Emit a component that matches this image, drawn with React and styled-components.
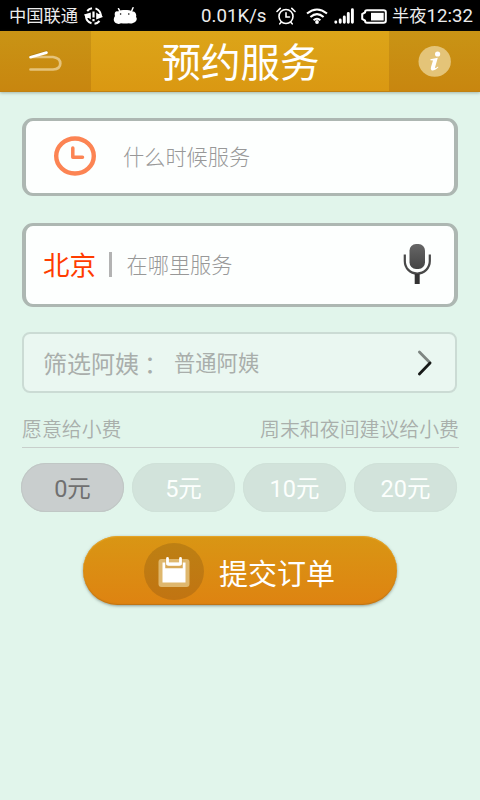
import React from 'react';
import styled, { createGlobalStyle } from 'styled-components';

const Global = createGlobalStyle`
  * { box-sizing: border-box; }
  body { margin: 0; background: #e1f5eb; }
  button { border: 0; padding: 0; margin: 0; background: none; font: inherit; color: inherit; }
`;

const Screen = styled.main`
  width: 480px;
  height: 800px;
  overflow: hidden;
  background: #e1f5eb;
  font-family: Roboto, "Noto Sans CJK SC", sans-serif;
  white-space: nowrap;
`;

const StatusBar = styled.div`
  height: 31px;
  background: #000;
  color: #ececec;
  display: flex;
  align-items: center;
  padding: 1px 8px 0 9px;
  line-height: 30px;
  svg { display: block; flex: none; }
`;
const StatusText = styled.span`
  width: ${p => p.$w}px;
  font-size: ${p => p.$size || 17.3}px;
  margin-right: ${p => p.$gap || 0}px;
`;
const ClockDigits = styled.span`
  font-size: 18.6px;
`;
const StatusIcon = styled.svg`
  margin-right: ${p => p.$gap}px;
`;
const Spacer = styled.div`flex: 1;`;

const Header = styled.header`
  height: 61px;
  display: grid;
  grid-template-columns: 91px 298px 91px;
  background: linear-gradient(#dca519, #da9812);
  border-bottom: 1px solid #c18112;
  box-shadow: 0 1px 3px rgba(70, 90, 70, .4);
`;
const HeaderButton = styled.button`
  display: flex;
  align-items: center;
  justify-content: center;
  background: linear-gradient(#c99415, #c8860f);
`;
const Title = styled.h1`
  margin: 0;
  color: #fff;
  font-size: 39.5px;
  line-height: 60px;
  font-weight: 400;
  text-align: center;
  padding: 3px 0 0 1px;
  height: 60px;
`;

const Content = styled.div`
  padding: 26px 22px 0;
  display: flex;
  flex-direction: column;
`;
const Field = styled.section`
  height: ${p => p.$h}px;
  margin-bottom: ${p => p.$below}px;
  border: 3px solid #adb7b2;
  border-left-width: 4px;
  border-right-width: 4px;
  border-radius: 11px;
  background: #fdfffe;
  display: flex;
  align-items: center;
  svg { display: block; flex: none; }
`;
const TimeIcon = styled.svg`margin: 0 26px 0 27px;`;
const Placeholder = styled.span`
  font-size: 21.2px;
  font-weight: 300;
  line-height: 30px;
  padding-top: 1px;
  margin-left: ${p => p.$shift || 0}px;
  color: #989898;
`;
const City = styled.span`
  width: 66px;
  padding: 2px 0 0 17px;
  box-sizing: content-box;
  font-size: 26.5px;
  line-height: 36px;
  color: #ff3c00;
`;
const Divider = styled.span`
  width: 3px;
  height: 25px;
  margin: 0 14px 2px 0;
  background: #b3b3b3;
`;
const MicIcon = styled.svg`margin: 0 22px 2px auto;`;

const FilterRow = styled.section`
  height: 61px;
  width: 435px;
  border: 2px solid #cbdbd4;
  border-radius: 8px;
  background: #eaf7f1;
  display: flex;
  align-items: center;
  padding: 2px 22px 0 19px;
  color: #a9aeab;
  svg { margin-bottom: 2px; }
`;
const FilterLabel = styled.span`
  width: 131px;
  padding-top: 2px;
  font-size: 24px;
  line-height: 36px;
`;
const Colon = styled.span`
  margin-left: 5px;
`;
const FilterValue = styled.span`
  flex: 1;
  font-size: 21.3px;
  line-height: 32px;
`;

const TipHeading = styled.div`
  height: 55px;
  width: 437px;
  padding-top: 23px;
  border-bottom: 1px solid #c8cfcb;
  display: flex;
  justify-content: space-between;
  font-size: 19.9px;
  line-height: 30px;
  font-weight: 350;
  color: #a9afab;
`;
const Tips = styled.div`
  width: 436px;
  margin: 15px 0 0 -1px;
  display: grid;
  grid-template-columns: repeat(4, 103px);
  justify-content: space-between;
`;
const Tip = styled.button`
  height: 49px;
  border-radius: 25px;
  padding-top: 2px;
  font-size: 23.5px;
  line-height: 48px;
  color: ${p => (p.$on ? '#707070' : '#fcfffd')};
  background: ${p => (p.$on ? '#c9cece' : '#d2e3db')};
  box-shadow: inset 0 0 0 1px ${p => (p.$on ? '#c0c7c5' : '#cfe1d8')};
`;

const Submit = styled.button`
  align-self: flex-start;
  width: 314px;
  height: 69px;
  margin: 24px 0 0 61px;
  padding-left: 61px;
  border-radius: 35px;
  display: flex;
  align-items: center;
  color: #fff;
  font-size: 29px;
  line-height: 60px;
  background: linear-gradient(#d99614, #de8311);
  box-shadow: 0 1px 3px rgba(60, 70, 60, .5), inset 0 1px 1px #e5a529, inset 0 -1px 1px #bd7417;
`;
const SubmitLabel = styled.span`
  padding-top: 8px;
`;
const SubmitBadge = styled.span`
  width: 60px;
  height: 57px;
  margin: 2px 15px 0 0;
  border-radius: 50%;
  display: flex;
  align-items: center;
  justify-content: center;
  background: linear-gradient(#bd8013, #c17412);
`;

const tips = ['0元', '5元', '10元', '20元'];

export default function App() {
  return (
    <Screen>
      <Global />
      <StatusBar>
        <StatusText $w={69} $gap={6}>中国联通</StatusText>
        <StatusIcon $gap={10} width="19" height="18" viewBox="0 0 19 18" fill="none" stroke="#fff" strokeWidth="2">
          <path d="M8 1.3A8 8 0 0 0 3.2 4M2 9Q2 14.5 7.5 16.2" />
          <path d="M10.5 16.8A8 8 0 0 0 15.5 14M17 9.5Q17 3.5 11.5 1.4" />
          <path d="M0 7.5L6.8 5.5V12.5L4.8 11L2 11Z M18.8 10L12.2 12.5V5.5L14.5 7H17Z" fill="#fff" stroke="none" />
          <path d="M9.5 4.5V10.5M9.5 12V14.2" strokeWidth="2.2" />
        </StatusIcon>
        <StatusIcon $gap={0} width="25" height="18" viewBox="0 0 25 18">
          <path d="M5 4.5C2.5 3.5 1 6 2 9C-.2 12 .5 16 4 16.5Q5.5 17.5 8 16.2Q12 17 16 16.2Q18 17 20 16C24 15 24.5 11 23 10C24 7 22 4 19.5 4.5C16 2.6 8 2.7 5 4.5Z" fill="#fff" />
          <path d="M7 4.5L5.5 1.7M18.5 4.5L20 .8" stroke="#fff" strokeWidth="1.5" strokeLinecap="round" />
          <circle cx="7.6" cy="7" r=".8" />
          <circle cx="15.8" cy="7" r=".8" />
        </StatusIcon>
        <Spacer />
        <StatusText $w={65} $gap={10} $size={18.7}>0.01K/s</StatusText>
        <StatusIcon $gap={10} width="20" height="18" viewBox="0 0 20 18" fill="none" stroke="#fff" strokeWidth="1.6" strokeLinecap="round">
          <circle cx="10" cy="9.5" r="7" />
          <path d="M10 5.8V10H13.5M1 4.5L4.2 1.4M19 4.5L15.8 1.4M5 15.5L3.8 16.8M15 15.5L16.2 16.8" />
        </StatusIcon>
        <StatusIcon $gap={6} width="22" height="16" viewBox="0 0 22 16" fill="none" stroke="#fff" strokeWidth="2.1">
          <path d="M1 5.5Q11-2.5 21 5.5M4.4 9Q11 3.4 17.6 9M7.6 12.2Q11 9.3 14.4 12.2" />
          <circle cx="11" cy="14" r="1.9" fill="#fff" stroke="none" />
        </StatusIcon>
        <StatusIcon $gap={7} width="20" height="16" viewBox="0 0 20 16" stroke="#fff" strokeWidth="2.9" strokeLinecap="round">
          <path d="M1.8 14V14.2M6.2 12V14.2M10.3 9V14.2" />
          <path d="M14.3 5.5V14.2M18.4 1.8V14.2" />
        </StatusIcon>
        <StatusIcon $gap={5} width="26" height="15" viewBox="0 0 26 15" fill="none">
          <path d="M6 1.2H22.5Q24.8 1.2 24.8 3V12Q24.8 13.8 22.5 13.8H6Q4 13.8 4 11.5L1.2 10V5L4 3.5Q4 1.2 6 1.2Z" stroke="#fff" strokeWidth="2" />
          <rect x="10" y="3.8" width="12.7" height="7.7" fill="#fff" />
        </StatusIcon>
        <StatusText $w={80} $size={17.3}>半夜<ClockDigits>12:32</ClockDigits></StatusText>
      </StatusBar>

      <Header>
        <HeaderButton aria-label="返回">
          <svg width="36" height="24" viewBox="0 0 36 24" fill="none" strokeLinecap="round">
            <path d="M3 8H25Q32.3 9 32.3 14.5T25 20.5H2.5" stroke="#e5c37b" strokeWidth="2.7" />
            <path d="M2.5 7.7L18.5 3" stroke="#8c690f" strokeWidth="2.8" opacity=".5" />
            <path d="M2.5 8.2L18.5 3.6" stroke="#fff" strokeWidth="2.7" />
          </svg>
        </HeaderButton>
        <Title>预约服务</Title>
        <HeaderButton aria-label="说明">
          <svg width="34" height="32" viewBox="0 0 34 32">
            <ellipse cx="16.7" cy="16.4" rx="16.2" ry="15.4" fill="#e4c478" />
            <circle cx="19.6" cy="9" r="2.6" fill="#fff" />
            <path d="M12.4 14.2L19.8 12.8L17 22.5Q16.8 23.7 20 21.4L20.4 22.2Q16 26.3 13.5 25.2Q12.3 24.6 13 22L15 15.5L12.4 15.2Z" fill="#fff" />
          </svg>
        </HeaderButton>
      </Header>

      <Content>
        <Field $h={78} $below={27}>
          <TimeIcon width="44" height="42" viewBox="0 0 44 42" fill="none" stroke="#fc8453">
            <ellipse cx="22" cy="20" rx="18.8" ry="17.5" strokeWidth="4.4" />
            <path d="M19.8 12V21.2H29.5" strokeWidth="3.5" strokeLinecap="round" strokeLinejoin="round" />
          </TimeIcon>
          <Placeholder>什么时候服务</Placeholder>
        </Field>

        <Field $h={84} $below={25}>
          <City>北京</City>
          <Divider />
          <Placeholder $shift={0.5}>在哪里服务</Placeholder>
          <MicIcon width="30" height="42" viewBox="0 0 30 42" fill="none">
            <defs>
              <linearGradient id="micFill" x1="0" y1="0" x2="0" y2="1">
                <stop stopColor="#666" />
                <stop offset="1" stopColor="#444" />
              </linearGradient>
            </defs>
            <rect x="7.5" y="1" width="15.5" height="25" rx="6.5" fill="url(#micFill)" />
            <path d="M2.8 11.5V18C2.8 25 8 30.5 15.2 30.5S27.8 25 27.8 18V11.5" stroke="#484848" strokeWidth="2.2" />
            <path d="M15.2 31V41" stroke="#333" strokeWidth="5" />
          </MicIcon>
        </Field>

        <FilterRow>
          <FilterLabel>筛选阿姨<Colon>：</Colon></FilterLabel>
          <FilterValue>普通阿姨</FilterValue>
          <svg width="16" height="28" viewBox="0 0 16 28" fill="none" strokeWidth="2.8" strokeLinecap="round">
            <path d="M2.4 3L13 13.8" stroke="#7e8682" />
            <path d="M13 14L2.4 25" stroke="#171a18" />
          </svg>
        </FilterRow>

        <TipHeading>
          <span>愿意给小费</span>
          <span>周末和夜间建议给小费</span>
        </TipHeading>
        <Tips>
          {tips.map((tip, i) => <Tip key={tip} $on={i === 0}>{tip}</Tip>)}
        </Tips>

        <Submit>
          <SubmitBadge>
            <svg width="32" height="32" viewBox="0 0 32 32" fill="none">
              <rect x=".5" y="3" width="31" height="28" rx="3" fill="#dfb76d" />
              <path d="M4.5 6.5H27.5V26.5H4.5Z" fill="#fff" />
              <path d="M8.5 3V11H23.5V3" stroke="#d8a856" strokeWidth="2.5" />
              <path d="M9.5 2.5V8M22.5 2.5V8" stroke="#fff" strokeWidth="2.8" strokeLinecap="round" />
              <path d="M11 8H21" stroke="#fff" strokeWidth="2.5" />
            </svg>
          </SubmitBadge>
          <SubmitLabel>提交订单</SubmitLabel>
        </Submit>
      </Content>
    </Screen>
  );
}
